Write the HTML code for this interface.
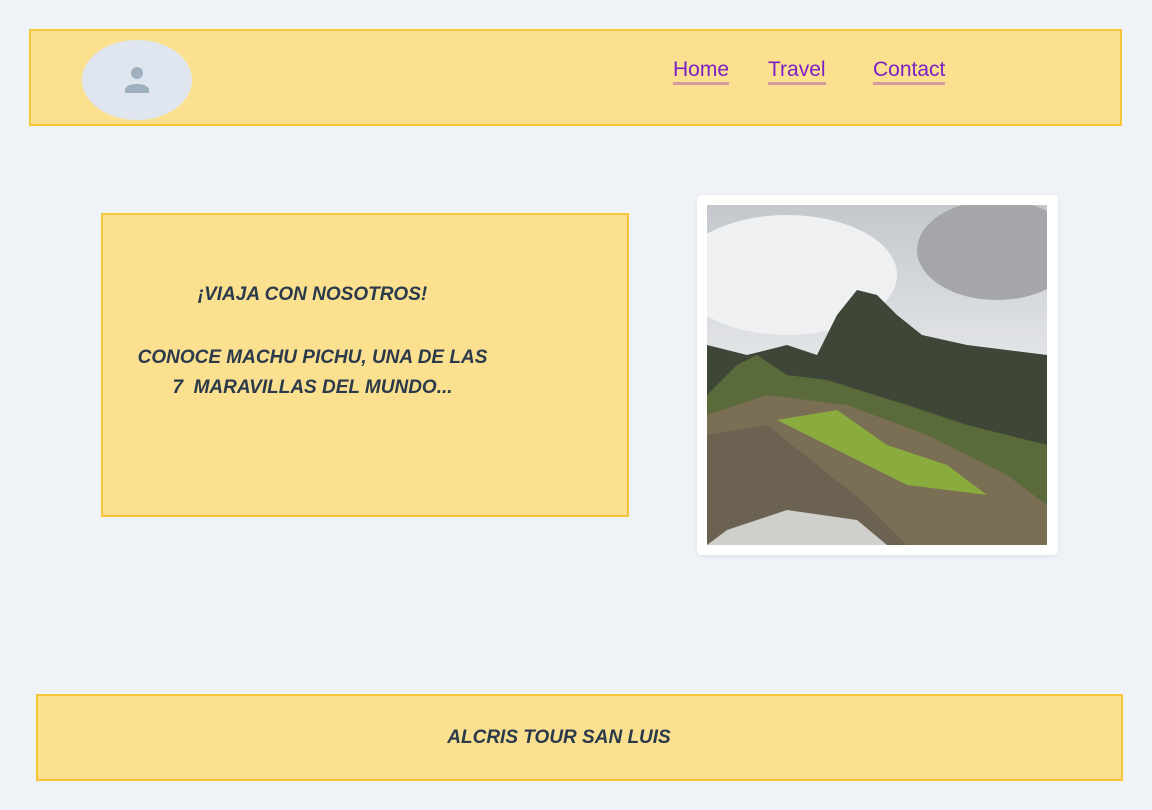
<!DOCTYPE html>
<html><head><meta charset="utf-8"><style>
*{margin:0;padding:0;box-sizing:border-box}
body{width:1152px;height:810px;background:#eff3f7;position:relative;overflow:hidden;font-family:"Liberation Sans",sans-serif}
.box{position:absolute;background:#fbe08f;border:2px solid #f6c636}
.nav a{position:absolute;top:58px;font-size:21px;color:#7c1fc6;text-decoration:none;border-bottom:3px solid #d49aa0;line-height:23px;padding-bottom:1px}
.t{position:absolute;font-weight:bold;font-style:italic;color:#2a3a4b;font-size:19px;white-space:nowrap;text-align:center}
</style></head><body>
<div class="box" style="left:29px;top:29px;width:1093px;height:97px"></div>
<div style="position:absolute;left:82px;top:40px;width:110px;height:80px;border-radius:50%;background:#dfe6ef"></div>
<svg style="position:absolute;left:122px;top:64px" width="30" height="32" viewBox="0 0 30 32"><circle cx="15" cy="9" r="6" fill="#a0b0bf"/><path d="M3 29v-3c0-4 6-6 12-6s12 2 12 6v3z" fill="#a0b0bf"/></svg>
<div class="nav"><a style="left:673px">Home</a><a style="left:768px">Travel</a><a style="left:873px">Contact</a></div>
<div class="box" style="left:101px;top:213px;width:528px;height:304px"></div>
<div class="t" style="left:130px;width:365px;top:284px">¡VIAJA CON NOSOTROS!</div>
<div class="t" style="left:130px;width:365px;top:343px;line-height:30px">CONOCE MACHU PICHU, UNA DE LAS<br>7&nbsp; MARAVILLAS DEL MUNDO...</div>
<div style="position:absolute;left:697px;top:195px;width:361px;height:360px;background:#fff;border-radius:4px;box-shadow:0 1px 4px rgba(0,0,0,.08)"></div>
<svg style="position:absolute;left:707px;top:205px" width="340" height="340" viewBox="0 0 340 340">
<defs><linearGradient id="sky" x1="0" y1="0" x2="0" y2="1"><stop offset="0" stop-color="#c4c7cc"/><stop offset=".5" stop-color="#e6e8ea"/><stop offset="1" stop-color="#c9cdd2"/></linearGradient></defs>
<rect width="340" height="340" fill="url(#sky)"/>
<ellipse cx="80" cy="70" rx="110" ry="60" fill="#eef0f1"/>
<ellipse cx="290" cy="45" rx="80" ry="50" fill="#a4a6a9"/>
<path d="M0 140 L40 150 L80 140 L110 150 L130 110 L150 85 L170 90 L190 110 L215 130 L260 140 L340 150 L340 340 L0 340z" fill="#3e4637"/>
<path d="M0 190 L30 160 L50 150 L80 170 L120 175 L200 200 L260 220 L340 240 L340 340 L0 340z" fill="#5b6a3a"/>
<path d="M0 210 L60 190 L140 200 L220 230 L300 270 L340 300 L340 340 L0 340z" fill="#7a6e55"/>
<path d="M70 215 L130 205 L180 240 L240 260 L280 290 L200 280 L120 240z" fill="#8aab3d"/>
<path d="M0 230 L60 220 L110 260 L160 300 L200 340 L0 340z" fill="#6c6252"/>
<path d="M20 325 L80 305 L150 315 L180 340 L0 340z" fill="#cfcfcc"/>
</svg>
<div class="box" style="left:36px;top:694px;width:1087px;height:87px"></div>
<div class="t" style="left:400px;width:318px;top:727px">ALCRIS TOUR SAN LUIS</div>
</body></html>
